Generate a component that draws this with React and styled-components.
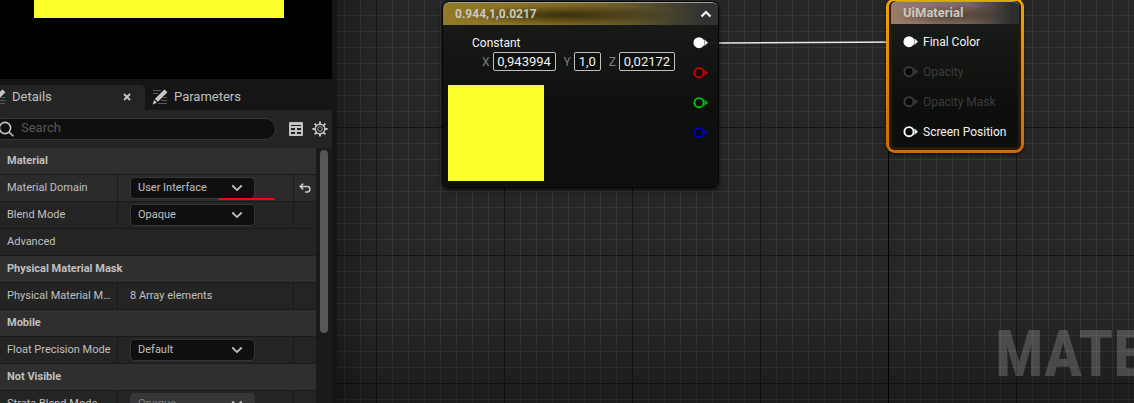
import React, { useId } from "react";
import styled, { createGlobalStyle } from "styled-components";

const GlobalStyle = createGlobalStyle`
  * { box-sizing: border-box; }
  body { margin: 0; background: #151515; }
  button, input, select { font: inherit; color: inherit; margin: 0; }
`;

const Editor = styled.div`
  display: flex;
  height: 100vh;
  overflow: hidden;
  background: #151515;
  color: #c0c0c0;
  font: 12px/16px Roboto, "Liberation Sans", sans-serif;
`;

/* ---------- left side: preview and details ---------- */

const Sidebar = styled.aside`
  display: flex;
  flex-direction: column;
  flex: 0 0 332px;
  margin-right: 5px;
  min-height: 0;
`;

const Preview = styled.div`
  flex: 0 0 79px;
  padding: 0 48px 0 34px;
  background: #000;
`;

const PreviewQuad = styled.div`
  height: 18px;
  background: #faff2b;
`;

const TabBar = styled.div`
  display: flex;
  flex: 0 0 31px;
  padding-top: 6px;
`;

const Tab = styled.div`
  display: flex;
  align-items: center;
  width: ${(p) => (p.$active ? "145px" : "auto")};
  padding: 0 14px 2px ${(p) => (p.$active ? "0" : "7px")};
  border-radius: 0 5px 0 0;
  background: ${(p) => (p.$active ? "#242424" : "transparent")};
  overflow: hidden;
`;

const TabButton = styled.button`
  display: flex;
  align-items: center;
  gap: 6px;
  flex: 1;
  margin-left: ${(p) => (p.$cut ? "-10px" : "0")};
  padding: 0;
  border: 0;
  background: none;
  font-size: 13px;
`;

const IconButton = styled.button`
  display: grid;
  place-items: center;
  padding: 0;
  border: 0;
  background: none;
  color: #c0c0c0;
`;

const Toolbar = styled.div`
  display: flex;
  align-items: center;
  flex: 0 0 38px;
  gap: 9px;
  padding-right: 4px;
  background: #242424;
`;

const SearchBox = styled.label`
  display: flex;
  align-items: center;
  flex: 1;
  height: 22px;
  gap: 7px;
  margin: 0 4px 0 -8px;
  padding-left: 5px;
  border: 1px solid #363636;
  border-radius: 11px;
  background: #0f0f0f;
`;

const SearchInput = styled.input`
  flex: 1;
  min-width: 0;
  padding: 0 0 2px;
  border: 0;
  outline: 0;
  background: none;
  font-size: 13px;
  &::placeholder { color: #575757; opacity: 1; }
`;

const DetailsBody = styled.div`
  display: flex;
  flex: 1;
  min-height: 0;
  overflow: hidden;
  background: #1a1a1a;
  font-size: 11px;
`;

const PropertyList = styled.div`
  flex: 1;
  min-width: 0;
`;

const Category = styled.h2`
  height: 27px;
  margin: 0;
  padding: 0 7px;
  border-bottom: 1px solid #1a1a1a;
  background: ${(p) => (p.$plain ? "#242424" : "#2f2f2f")};
  font-size: 11px;
  line-height: 26px;
  font-weight: ${(p) => (p.$plain ? 400 : 700)};
`;

const PropertyRow = styled.div`
  display: grid;
  grid-template-columns: 118px 1fr 22px;
  height: 27px;
  border-bottom: 1px solid #1a1a1a;
  background: ${(p) => (p.$changed ? "#2b2b2b" : "#242424")};
`;

const NameCell = styled.label`
  padding: 0 5px 0 7px;
  border-right: 1px solid #1a1a1a;
  line-height: 26px;
  white-space: nowrap;
  overflow: hidden;
  text-overflow: ellipsis;
`;

const ValueCell = styled.div`
  position: relative;
  display: flex;
  align-items: center;
  padding-left: 12px;
  border-right: 1px solid #1a1a1a;
`;

const ResetCell = styled.div`
  display: grid;
  place-items: center;
`;

const SelectBox = styled.div`
  display: grid;
  align-items: center;
  width: 125px;
  > * { grid-area: 1 / 1; }
  > svg { justify-self: end; margin-right: 12px; pointer-events: none; }
`;

const Select = styled.select`
  appearance: none;
  width: 100%;
  height: 22px;
  padding: 0 30px 1px 7px;
  border: 1px solid #363636;
  border-radius: 4px;
  background: ${(p) => (p.disabled ? "#363636" : "#0f0f0f")};
  color: ${(p) => (p.disabled ? "#808080" : "#c0c0c0")};
  opacity: 1;
`;

const RedMark = styled.div`
  position: absolute;
  left: 100px;
  bottom: 1px;
  width: 57px;
  height: 2px;
  border-radius: 1px;
  background: #e01010;
`;

const ScrollTrack = styled.div`
  flex: 0 0 16px;
  padding: 2px 4px 0;
`;

const ScrollThumb = styled.div`
  width: 8px;
  height: 183px;
  border-radius: 4px;
  background: #575757;
`;

/* ---------- right side: node graph ---------- */

const Graph = styled.main`
  position: relative;
  flex: 1;
  min-width: 0;
  overflow: hidden;
  background:
    linear-gradient(to right, rgba(0, 0, 0, 0.25), transparent 40px),
    linear-gradient(to top, rgba(0, 0, 0, 0.28), transparent 90px),
    linear-gradient(#000, #000) 551px 0 / 1px 100% no-repeat,
    linear-gradient(to right, #141414 1px, transparent 1px) 39px 0 / 128px 128px,
    linear-gradient(to bottom, #141414 1px, transparent 1px) 0 127px / 128px 128px,
    linear-gradient(to right, #353535 1px, transparent 1px) 7px 0 / 16px 16px,
    linear-gradient(to bottom, #353535 1px, transparent 1px) 0 15px / 16px 16px,
    #262626;
`;

const Wires = styled.svg`
  position: absolute;
  left: 0;
  top: 0;
`;

const Watermark = styled.div`
  position: absolute;
  left: 658px;
  bottom: 16px;
  color: rgba(255, 255, 255, 0.19);
  font: 700 64px/64px "Roboto Condensed", "Liberation Sans Narrow", Roboto, sans-serif;
`;

const Node = styled.section`
  position: absolute;
  left: ${(p) => p.$x}px;
  top: ${(p) => p.$y}px;
  width: ${(p) => p.$w}px;
  border-radius: 7px;
  color: #f4f4f4;
  background: linear-gradient(rgba(24, 27, 24, 0.94), rgba(13, 15, 13, 0.97) 60%);
  overflow: hidden;
  ${(p) =>
    p.$selected
      ? `border: 3px solid transparent;
         border-radius: 9px;
         padding: 0 2px;
         background:
           linear-gradient(#1b1e1b, #0d0f0d 70%) padding-box,
           linear-gradient(#f0a408, #d06a04) border-box;
         box-shadow: inset 0 0 0 3px #2a1a04, 0 2px 3px rgba(0, 0, 0, 0.5);`
      : `border: 1px solid #060606; box-shadow: 0 2px 4px rgba(0, 0, 0, 0.7);`}
`;

const NodeHeader = styled.header`
  display: flex;
  align-items: center;
  justify-content: space-between;
  height: 23px;
  padding: 0 6px 0 12px;
  border-top: 1px solid #a0a0a0;
  border-radius: 6px 6px 0 0;
  color: #c9c9c4;
  background: ${(p) =>
    p.$tone === "gold"
      ? "radial-gradient(ellipse 110px 10px at 45% 55%, rgba(40, 30, 5, 0.8), transparent), linear-gradient(to right, #937a26 0, #806a22 45%, #6a5a2a 65%, #303232 95%)"
      : "radial-gradient(ellipse 60px 10px at 50% 60%, rgba(50, 38, 30, 0.6), transparent), linear-gradient(to right, #9a7c68 0, #7c685a 60%, #2c2e2e 95%)"};
`;

const NodeTitle = styled.h3`
  margin: 0;
  font-size: ${(p) => (p.$small ? 12 : 13)}px;
  line-height: 20px;
  font-weight: 700;
`;

const ConstantBody = styled.div`
  display: flex;
  justify-content: space-between;
  padding: 10px 9px 6px 5px;
`;

const ConstantValues = styled.div`
  display: flex;
  flex-direction: column;
`;

const Caption = styled.div`
  padding-left: 24px;
  line-height: 16px;
`;

const VectorRow = styled.div`
  display: flex;
  gap: 8px;
  margin: 1px 0 14px 34px;
`;

const VectorField = styled.label`
  display: flex;
  align-items: center;
  gap: 3px;
  color: #7c7c7c;
`;

const VectorInput = styled.input`
  width: ${(p) => p.$w}px;
  height: 19px;
  padding: 0;
  border: 1px solid #c0c0c0;
  border-radius: 2px;
  background: #0d0f0d;
  color: #f4f4f4;
  font-size: 13px;
  text-align: center;
`;

const Swatch = styled.div`
  width: 96px;
  height: 96px;
  background: #faff2b;
`;

const PinList = styled.div`
  display: flex;
  flex-direction: column;
  gap: 14px;
`;

const MaterialPins = styled(PinList)`
  padding: 10px 0 10px 12px;
`;

const PinRow = styled.div`
  display: flex;
  align-items: center;
  gap: 4px;
  height: 16px;
  color: ${(p) => (p.$off ? "#3c3c3c" : "#f4f4f4")};
`;

/* ---------- drawings ---------- */

const Chevron = () => (
  <svg width="12" height="8" viewBox="0 0 12 8" fill="none" stroke="#c0c0c0" strokeWidth="1.8" aria-hidden="true">
    <path d="M1.3 1.5 6 6.1l4.7-4.6" />
  </svg>
);

const PencilIcon = () => (
  <svg width="16" height="16" viewBox="0 0 16 16" aria-hidden="true">
    <path d="M1 1.5h8M1 4.5h5M11 8.5h4M9 11.5h6M6 14.5h9" stroke="#585858" strokeWidth="1.2" />
    <path d="M12.4.4 15.4 3.2 6 12.8 2.8 10zM2.1 10.9l2.9 2.8-4.4 1.7z" fill="#c8c8c8" />
  </svg>
);

const CloseIcon = () => (
  <svg width="8" height="8" viewBox="0 0 8 8" stroke="#c8c8c8" strokeWidth="1.8" aria-hidden="true">
    <path d="m1 1 6 6M7 1 1 7" />
  </svg>
);

const SearchIcon = () => (
  <svg width="16" height="16" viewBox="0 0 16 16" fill="none" stroke="#c8c8c8" strokeWidth="1.6" aria-hidden="true">
    <circle cx="7" cy="7" r="5.6" />
    <path d="m11 11 4.3 4.3" />
  </svg>
);

const TableIcon = () => (
  <svg width="14" height="14" viewBox="0 0 14 14" aria-hidden="true">
    <path
      fillRule="evenodd"
      fill="#c4c4c4"
      d="M1 0h12a1 1 0 0 1 1 1v12a1 1 0 0 1-1 1H1a1 1 0 0 1-1-1V1a1 1 0 0 1 1-1zM2 3v1h10V3zM2 6v2h4V6zm6 0v2h4V6zM2 10v2h4v-2zm6 0v2h4v-2z"
    />
  </svg>
);

const GearIcon = () => (
  <svg width="16" height="16" viewBox="0 0 16 16" fill="none" aria-hidden="true">
    <g stroke="#c4c4c4" strokeWidth="2">
      {[0, 45, 90, 135].map((a) => (
        <path key={a} d="M8 .4v2.8M8 12.8v2.8" transform={`rotate(${a} 8 8)`} />
      ))}
    </g>
    <circle cx="8" cy="8" r="4.8" stroke="#c4c4c4" strokeWidth="1.4" />
    <circle cx="8" cy="8" r="2.3" stroke="#7c7c7c" strokeWidth="1.3" />
  </svg>
);

const ResetIcon = () => (
  <svg width="12" height="10" viewBox="0 0 12 10" fill="none" stroke="#c8c8c8" strokeWidth="1.5" aria-hidden="true">
    <path d="M4.2.6 1.2 3.5l3 2.9M1.2 3.5h7a2.7 2.7 0 0 1 0 5.4H6" />
  </svg>
);

const Pin = ({ color, filled }) => (
  <svg width="16" height="12" viewBox="0 0 16 12" aria-hidden="true">
    <circle cx="6" cy="5.7" r="4.6" fill={filled ? color : "#080808"} stroke={color} strokeWidth="1.9" />
    <path d="M11.7 2.8Q13 4.8 14.8 5.7 13 6.6 11.7 8.6 12.4 5.7 11.7 2.8z" fill={color} stroke={color} strokeWidth=".5" />
  </svg>
);

/* ---------- composed parts ---------- */

function SelectRow({ name, value, changed, disabled }) {
  const id = useId();
  return (
    <PropertyRow $changed={changed}>
      <NameCell htmlFor={id}>{name}</NameCell>
      <ValueCell>
        <SelectBox>
          <Select id={id} defaultValue={value} disabled={disabled}>
            <option>{value}</option>
          </Select>
          <Chevron />
        </SelectBox>
        {changed && <RedMark />}
      </ValueCell>
      <ResetCell>
        {changed && (
          <IconButton aria-label="Reset to default">
            <ResetIcon />
          </IconButton>
        )}
      </ResetCell>
    </PropertyRow>
  );
}

const AXES = [
  ["X", "0,943994", 63],
  ["Y", "1,0", 27],
  ["Z", "0,02172", 56],
];

const INPUT_PINS = [
  ["Final Color", true, false],
  ["Opacity", false, true],
  ["Opacity Mask", false, true],
  ["Screen Position", false, false],
];

export default function App() {
  return (
    <Editor>
      <GlobalStyle />
      <Sidebar>
        <Preview>
          <PreviewQuad />
        </Preview>
        <TabBar>
          <Tab $active>
            <TabButton $cut>
              <PencilIcon />
              Details
            </TabButton>
            <IconButton aria-label="Close tab">
              <CloseIcon />
            </IconButton>
          </Tab>
          <Tab>
            <TabButton>
              <PencilIcon />
              Parameters
            </TabButton>
          </Tab>
        </TabBar>
        <Toolbar>
          <SearchBox>
            <SearchIcon />
            <SearchInput placeholder="Search" aria-label="Search" />
          </SearchBox>
          <IconButton aria-label="Property matrix">
            <TableIcon />
          </IconButton>
          <IconButton aria-label="Settings">
            <GearIcon />
          </IconButton>
        </Toolbar>
        <DetailsBody>
          <PropertyList>
            <Category>Material</Category>
            <SelectRow name="Material Domain" value="User Interface" changed />
            <SelectRow name="Blend Mode" value="Opaque" />
            <Category $plain>Advanced</Category>
            <Category>Physical Material Mask</Category>
            <PropertyRow>
              <NameCell as="div">Physical Material Mask</NameCell>
              <ValueCell>8 Array elements</ValueCell>
              <ResetCell />
            </PropertyRow>
            <Category>Mobile</Category>
            <SelectRow name="Float Precision Mode" value="Default" />
            <Category>Not Visible</Category>
            <SelectRow name="Strata Blend Mode" value="Opaque" disabled />
          </PropertyList>
          <ScrollTrack>
            <ScrollThumb />
          </ScrollTrack>
        </DetailsBody>
      </Sidebar>

      <Graph>
        <Watermark>MATERIAL</Watermark>
        <Wires width="600" height="80" viewBox="0 0 600 80" aria-hidden="true">
          <path d="M368 43C430 43 490 42 570 42" fill="none" stroke="#e8e8e8" strokeWidth="1.6" />
        </Wires>

        <Node $x={105} $y={1} $w={277}>
          <NodeHeader $tone="gold">
            <NodeTitle $small>0.944,1,0.0217</NodeTitle>
            <IconButton aria-label="Collapse node">
              <svg width="12" height="8" viewBox="0 0 12 8" fill="none" stroke="#fff" strokeWidth="2.2" aria-hidden="true">
                <path d="M1.5 6.5 6 2l4.5 4.5" />
              </svg>
            </IconButton>
          </NodeHeader>
          <ConstantBody>
            <ConstantValues>
              <Caption>Constant</Caption>
              <VectorRow>
                {AXES.map(([axis, value, w]) => (
                  <VectorField key={axis}>
                    {axis}
                    <VectorInput $w={w} defaultValue={value} />
                  </VectorField>
                ))}
              </VectorRow>
              <Swatch />
            </ConstantValues>
            <PinList>
              {["#ffffff", "#d40000", "#00c800", "#0000d0"].map((color, i) => (
                <PinRow key={color}>
                  <Pin color={color} filled={i === 0} />
                </PinRow>
              ))}
            </PinList>
          </ConstantBody>
        </Node>

        <Node $x={549} $y={-2} $w={138} $selected>
          <NodeHeader $tone="bronze">
            <NodeTitle>UiMaterial</NodeTitle>
          </NodeHeader>
          <MaterialPins>
            {INPUT_PINS.map(([label, filled, off]) => (
              <PinRow key={label} $off={off}>
                <Pin color={off ? "#3c3c3c" : "#ffffff"} filled={filled} />
                {label}
              </PinRow>
            ))}
          </MaterialPins>
        </Node>
      </Graph>
    </Editor>
  );
}
